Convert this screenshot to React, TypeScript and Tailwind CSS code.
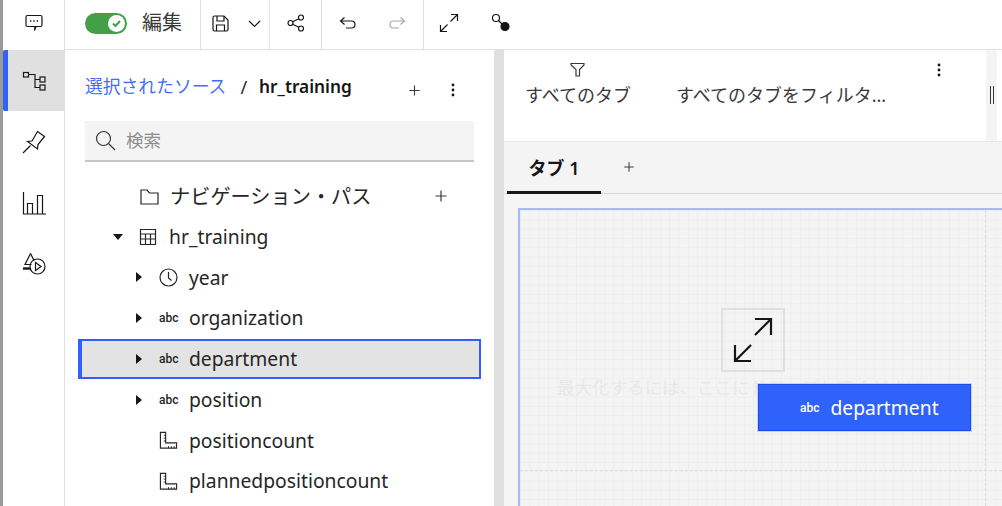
import type { ReactNode } from "react"

const jp = "font-['Noto_Sans','Noto_Sans_CJK_JP',sans-serif]"

function Ic({ size, box = 24, className = "", children }: { size: number; box?: number; className?: string; children: ReactNode }) {
    return (
        <svg width={size} height={size} viewBox={`0 0 ${box} ${box}`} fill="none" stroke="currentColor" strokeWidth={1.2} className={`shrink-0 ${className}`}>
            {children}
        </svg>
    )
}

const Plus = ({ size = 14 }: { size?: number }) => (
    <Ic size={size} box={14} className="text-[#393939]"><path d="M7 1.5v11M1.5 7h11" /></Ic>
)

const Dots = () => (
    <svg width="4" height="14" viewBox="0 0 4 14" className="shrink-0 fill-[#161616]">
        <circle cx="2" cy="2" r="1.4" /><circle cx="2" cy="7" r="1.4" /><circle cx="2" cy="12" r="1.4" />
    </svg>
)

const Caret = ({ down = false }: { down?: boolean }) => (
    <svg width="10" height="10" viewBox="0 0 10 10" className="shrink-0 fill-[#161616]">
        {down ? <path d="M0 2h10L5 8z" /> : <path d="M2 0l6 5-6 5z" />}
    </svg>
)

const Abc = ({ className = "text-[#262626]" }: { className?: string }) => (
    <span className={`font-['Roboto',sans-serif] text-[12px] leading-none font-medium ${className}`}>abc</span>
)

const Ruler = () => (
    <Ic size={19} box={20} className="text-[#262626]">
        <path d="M1.5 1.5h5.5v11h11.5v5.5H1.5z" />
        <path d="M7 4.5H5M7 7.5H5M7 10.5H5M10 18v-2M13 18v-2M16 18v-2" strokeWidth={1} />
    </Ic>
)

function RailItem({ active = false, children }: { active?: boolean; children: ReactNode }) {
    return (
        <div className={`relative h-[61px] flex items-center justify-center ${active ? "bg-[#e0e0e0]" : ""}`}>
            {active && <div className="absolute left-0 top-0 bottom-0 w-[5px] bg-[#2f62f8] rounded-l-[2px]" />}
            {children}
        </div>
    )
}

function Rail() {
    return (
        <div className="w-[65px] shrink-0 border-l-[3px] border-l-[#9a9a9a] border-r border-r-[#e0e0e0] flex flex-col text-[#161616]">
            <div className="h-[50px] flex items-center justify-center pb-[4px]">
                <Ic size={20} box={20}>
                    <path d="M3.5 2.5h13a1.5 1.5 0 0 1 1.5 1.5v8a1.5 1.5 0 0 1-1.5 1.5H12L10.5 17.500l.5-4H3.500A1.500 1.500 0 0 1 2 12V4a1.500 1.500 0 0 1 1.500-1.500z" />
                    <path d="M6 8h1.400M9.300 8h1.400M12.600 8H14" strokeWidth={1.600} />
                </Ic>
            </div>
            <RailItem active>
                <Ic size={24} box={24}>
                    <rect x="1.500" y="3.500" width="5" height="4.500" />
                    <rect x="18" y="8" width="5" height="5" />
                    <rect x="18" y="16" width="5" height="5" />
                    <path d="M6.500 5.500h6.500v13h5M13 10.500h5" />
                </Ic>
            </RailItem>
            <RailItem>
                <Ic size={24} box={24}>
                    <path d="M1 23l7.500-7.500M15.500 1.500l7 5-6.500 8-.5 4.500L5.500 11.500l4.500-.5z" />
                </Ic>
            </RailItem>
            <RailItem>
                <Ic size={24} box={24}>
                    <path d="M1.500 1v22h22.500" />
                    <path d="M5.500 23V12.500h5V23M15.500 23V4.500h5V23" />
                </Ic>
            </RailItem>
            <RailItem>
                <Ic size={24} box={24} className="mt-[1px]">
                    <path d="M8.500 1.500L3 12.500h6.500" />
                    <path d="M8.500 1.500l3.500 7" />
                    <path d="M1 16.500h7" strokeWidth={2.400} />
                    <circle cx="15.500" cy="14.500" r="7.500" />
                    <path d="M13.500 10.500l5.500 4-5.500 4z" />
                </Ic>
            </RailItem>
        </div>
    )
}

function Sep() {
    return <div className="w-px self-stretch bg-[#e0e0e0] shrink-0" />
}

function Header() {
    return (
        <div className="h-[50px] shrink-0 border-b border-[#e0e0e0] flex items-stretch text-[#161616]">
            <div className="w-[135px] flex items-center pl-5 pb-[3px] shrink-0">
                <div className="w-[42px] h-[21px] rounded-full bg-[#43a047] relative shrink-0">
                    <div className="absolute right-[2px] top-[2px] w-[17px] h-[17px] rounded-full bg-white flex items-center justify-center">
                        <svg width="11" height="11" viewBox="0 0 11 11" fill="none" stroke="#43a047" strokeWidth="2"><path d="M2 5.500l2.500 2.500L9 3" /></svg>
                    </div>
                </div>
                <span className={`ml-[15px] text-[20px] leading-none text-[#393939] ${jp}`}>編集</span>
            </div>
            <Sep />
            <div className="w-[68px] flex items-center pl-[11px] pb-[3px] gap-[19px] shrink-0">
                <Ic size={17} box={17}>
                    <path d="M3 1h9l4 4v9.500a1.500 1.500 0 0 1-1.500 1.500h-12A1.500 1.500 0 0 1 1 14.500v-12A1.500 1.500 0 0 1 2.500 1z" />
                    <path d="M5 1v5h7V1M4.500 16v-6h8v6" />
                </Ic>
                <Ic size={13} box={13}><path d="M1 4l5.500 5.500L12 4" /></Ic>
            </div>
            <Sep />
            <div className="w-[51px] flex items-center justify-center pb-[3px] shrink-0">
                <Ic size={18} box={18}>
                    <circle cx="3.500" cy="9" r="2.500" /><circle cx="14" cy="3.500" r="2.500" /><circle cx="14" cy="14.500" r="2.500" />
                    <path d="M5.700 7.800l6.100-3.100M5.700 10.200l6.100 3.100" />
                </Ic>
            </div>
            <Sep />
            <div className="w-[101px] flex items-center pl-[17px] pb-[3px] gap-[33px] shrink-0">
                <Ic size={17} box={17}><path d="M5.500 2.500L1.500 6l4 3.500M1.500 6h11a3.500 3.500 0 0 1 0 7H7" /></Ic>
                <Ic size={17} box={17} className="text-[#a8a8a8]"><path d="M11.500 2.500l4 3.500-4 3.500M15.500 6h-11a3.500 3.500 0 0 0 0 7H10" /></Ic>
            </div>
            <Sep />
            <div className="flex items-center pl-[15px] pb-[3px] gap-[32px]">
                <Ic size={20} box={20}><path d="M12 1.500h6.500V8M18.500 1.500l-7 7M8 18.500H1.500V12M1.500 18.500l7-7" /></Ic>
                <svg width="20" height="20" viewBox="0 0 20 20" fill="none" stroke="#161616" strokeWidth="1.200" className="shrink-0">
                    <circle cx="5" cy="5" r="3.500" /><path d="M7.500 7.500l3.500 3.500" />
                    <circle cx="14" cy="13.500" r="4" fill="#161616" />
                </svg>
            </div>
        </div>
    )
}

function Row({ caret, icon, label, selected = false }: { caret?: boolean; icon: ReactNode; label: string; selected?: boolean }) {
    return (
        <div className={`h-[40.75px] flex items-center text-[19.300px] text-[#262626] ${selected ? "bg-[#e3e3e3] border-2 border-l-[4px] border-[#2f5fff] -mr-[7px] -ml-[7px]" : ""}`}>
            <div className={`flex items-center pl-[49px] ${selected ? "ml-[3px]" : ""}`}>
                <div className="w-[25px] flex items-center">{caret && <Caret />}</div>
                <div className="w-[30px] flex items-center">{icon}</div>
                <span className={`leading-none ${jp}`}>{label}</span>
            </div>
        </div>
    )
}

function Tree() {
    return (
        <div className="flex flex-col">
            <div className="h-[40px] flex items-center pl-[75px] pr-[46px] text-[#262626]">
                <Ic size={19} box={19} className="mr-[11px]"><path d="M1 3h6l2.500 3H18v11H1z" /></Ic>
                <span className={`text-[20.200px] leading-none ${jp}`}>ナビゲーション・パス</span>
                <span className="ml-auto"><Plus /></span>
            </div>
            <div className="h-[41px] flex items-center pl-[48px] text-[19.300px] text-[#262626]">
                <div className="w-[26px]"><Caret down /></div>
                <Ic size={18} box={18} className="mr-[12px]">
                    <path d="M1.500 1.500h15v15h-15zM1.500 6h15M1.500 11h15M6.500 6v10.500M11.500 6v10.500" />
                </Ic>
                <span className={`leading-none ${jp}`}>hr_training</span>
            </div>
            <div className="px-[20px]">
                <Row caret label="year" icon={
                    <Ic size={19} box={19}><circle cx="9.500" cy="9.500" r="8.500" /><path d="M9.500 4v6l3 2.500" /></Ic>
                } />
                <Row caret label="organization" icon={<Abc />} />
                <Row caret label="department" icon={<Abc />} selected />
                <Row caret label="position" icon={<Abc />} />
                <Row label="positioncount" icon={<Ruler />} />
                <Row label="plannedpositioncount" icon={<Ruler />} />
            </div>
        </div>
    )
}

function SourcePanel() {
    return (
        <div className="w-[429px] shrink-0 flex flex-col">
            <div className="h-[71px] shrink-0 flex items-center pl-[20px] pr-[39px] pt-[3px]">
                <span className={`text-[17.800px] leading-none text-[#3f6ff5] ${jp}`}>選択されたソース</span>
                <span className={`ml-[14px] text-[18px] leading-none text-[#262626] ${jp}`}>/</span>
                <span className={`ml-[12px] text-[17.300px] leading-none font-semibold text-[#161616] ${jp}`}>hr_training</span>
                <span className="ml-auto mr-[30px] mt-[6px]"><Plus size={13} /></span>
                <span className="mt-[6px]"><Dots /></span>
            </div>
            <div className="mx-[20px] h-[41px] shrink-0 bg-[#f4f4f4] border-b-2 border-[#c6c6c6] flex items-center pl-[10px]">
                <Ic size={21} box={21} className="text-[#393939]"><circle cx="8.500" cy="8.500" r="7" /><path d="M13.500 13.500l6.500 6.500" /></Ic>
                <span className={`ml-[10px] text-[17.500px] leading-none text-[#8d8d8d] ${jp}`}>検索</span>
            </div>
            <div className="mt-[14px]"><Tree /></div>
        </div>
    )
}

function FilterBar() {
    return (
        <div className="h-[92px] shrink-0 flex items-stretch border-b border-[#e8e8e8]">
            <div className="w-[482px] bg-white flex relative">
                <div className="w-[148px] flex flex-col items-center pt-[12px]">
                    <Ic size={15} box={15} className="text-[#393939] -ml-[1px]"><path d="M1 1.500h13v1.500l-4.500 4.500v6.500H6V7.500L1 3z" /></Ic>
                    <span className={`mt-[9px] text-[18px] leading-none text-[#393939] ${jp}`}>すべてのタブ</span>
                </div>
                <span className={`absolute left-[172px] top-[36px] text-[18px] leading-none text-[#393939] ${jp}`}>すべてのタブをフィルタ...</span>
                <span className="absolute left-[433px] top-[13px]"><Dots /></span>
            </div>
            <div className="w-[11px] bg-[#f4f4f4] flex justify-center pt-[36px]">
                <div className="w-[4px] h-[18px] border-x border-[#393939]" />
            </div>
            <div className="flex-1 bg-white" />
        </div>
    )
}

function TabBar() {
    return (
        <div className="h-[52px] shrink-0 bg-[#f4f4f4] border-b border-[#d8d8d8] flex items-stretch pl-[3px]">
            <div className="w-[94px] border-b-[4px] border-[#161616] -mb-[2px] flex items-center justify-center pt-[2px]">
                <span className={`text-[18px] leading-none font-semibold text-[#161616] ${jp}`}>タブ 1</span>
            </div>
            <div className="ml-[22px] flex items-center pb-[1px]"><Plus size={12} /></div>
        </div>
    )
}

function Canvas() {
    return (
        <div className="flex-1 min-h-0 bg-[#f5f5f5] pl-[14px] pt-[14px] overflow-hidden">
            <div className="relative h-full border-l-2 border-t-2 border-[#a9b7fb] bg-[#f4f4f4] bg-[linear-gradient(#eeeeee_1px,transparent_1px),linear-gradient(90deg,#eeeeee_1px,transparent_1px)] bg-[size:9.330px_9.330px]">
                <div className="absolute left-0 right-0 top-[260px] border-t border-dashed border-[#dcdcdc]" />
                <div className="absolute top-0 bottom-0 left-[465px] border-l border-dashed border-[#dcdcdc]" />
                <div className="absolute left-[201px] top-[98px] w-[64px] h-[64px] border-[2px] border-[#e0e0e0] flex items-center justify-center">
                    <Ic size={46} box={46} className="text-[#161616]">
                        <path d="M25 2h16v16M41 2L25 18M21 44H5V28M5 44l16-16" strokeWidth={2.200} />
                    </Ic>
                </div>
                <span className={`absolute left-[37px] top-[169px] whitespace-nowrap text-[17.500px] leading-none text-[#e8e8e8] ${jp}`}>最大化するには、ここにドロップしてください</span>
                <div className="absolute left-[238px] top-[174px] w-[213px] h-[47px] bg-[#2f62f8] border border-[#1a4df0] outline outline-1 outline-[#c5d2fd] flex items-center pl-[41px] text-white">
                    <Abc className="text-white" />
                    <span className={`ml-[11px] text-[19.300px] leading-none ${jp}`}>department</span>
                </div>
            </div>
        </div>
    )
}

export default function App() {
    return (
        <div className="w-[1002px] h-[506px] flex bg-white overflow-hidden">
            <Rail />
            <div className="flex-1 min-w-0 flex flex-col">
                <Header />
                <div className="flex-1 min-h-0 flex">
                    <SourcePanel />
                    <div className="w-[10px] shrink-0 bg-[#e0e0e0]" />
                    <div className="flex-1 min-w-0 flex flex-col">
                        <FilterBar />
                        <TabBar />
                        <Canvas />
                    </div>
                </div>
            </div>
        </div>
    )
}
